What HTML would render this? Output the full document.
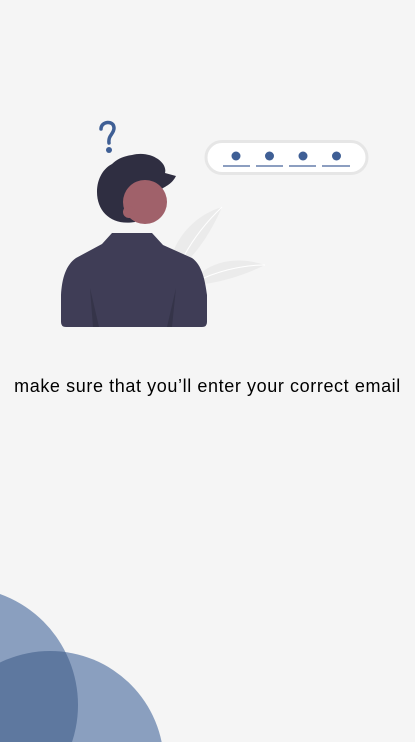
<!DOCTYPE html>
<html><head><meta charset="utf-8"><style>
html,body{margin:0;padding:0;background:#f5f5f5;width:415px;height:742px;overflow:hidden;position:relative}
.t{position:absolute;left:0;width:415px;top:376px;text-align:center;font-family:"Liberation Sans",sans-serif;font-size:18px;color:#000;letter-spacing:0.6px;white-space:nowrap}
svg{position:absolute;left:0;top:0;display:block}
</style></head><body>
<svg width="415" height="742" viewBox="0 0 415 742">
<defs><clipPath id="c1"><circle cx="-40" cy="705" r="118"/></clipPath></defs>
<path d="M222 207 C195 215 170 240 168 275 C190 265 210 235 222 207Z" fill="#ebebeb"/>
<path d="M265 265 C235 255 205 262 190 285 C215 285 245 275 265 265Z" fill="#ebebeb"/>
<path d="M222 207 C200 228 185 250 175 275" stroke="#fff" stroke-width="1" fill="none"/>
<path d="M265 265 C240 265 215 272 195 282" stroke="#fff" stroke-width="1" fill="none"/>
<path d="M101 129 C101 121 114 120 114 128 C114 134 108 135 109 143" stroke="#3f5f95" stroke-width="3.5" fill="none" stroke-linecap="round"/>
<circle cx="109" cy="150" r="3" fill="#3f5f95"/>
<rect x="206" y="141.5" width="161" height="32" rx="16" fill="#fff" stroke="#e6e6e6" stroke-width="3"/>
<g fill="#3f5f95"><circle cx="236" cy="156" r="4.5"/><circle cx="269.5" cy="156" r="4.5"/><circle cx="303" cy="156" r="4.5"/><circle cx="336.5" cy="156" r="4.5"/></g>
<g stroke="#3f5f95" stroke-width="1.5" opacity="0.8"><line x1="223" y1="166" x2="250" y2="166"/><line x1="256" y1="166" x2="283" y2="166"/><line x1="289" y1="166" x2="316" y2="166"/><line x1="322" y1="166" x2="350" y2="166"/></g>
<path d="M112 233 L152 233 L163 245 L192 258 C202 265 205 280 207 295 L207 322 Q207 327 202 327 L66 327 Q61 327 61 322 L61 295 C62 278 66 265 76 258 L102 244 Z" fill="#3f3d56"/>
<path d="M90 288 L99 327 L93 327Z M176 288 L167 327 L172 327Z" fill="#2f2e41" opacity="0.6"/>
<path d="M132 155 C150 150 168 162 165 173 L176 176 C172 184 166 186 160 190 L135 222 C112 226 97 212 97 192 C97 178 104 168 112 164 C118 158 125 156 132 155Z" fill="#2f2e41"/>
<circle cx="145" cy="202" r="22" fill="#a0616a"/>
<circle cx="129" cy="212" r="6" fill="#a0616a"/>
<circle cx="-40" cy="705" r="118" fill="#8a9fbf"/>
<circle cx="50" cy="765" r="114" fill="#8a9fbf"/>
<circle cx="50" cy="765" r="114" fill="#5e789f" clip-path="url(#c1)"/>
</svg>
<div class="t">make sure that you’ll enter your correct email</div>
</body></html>
